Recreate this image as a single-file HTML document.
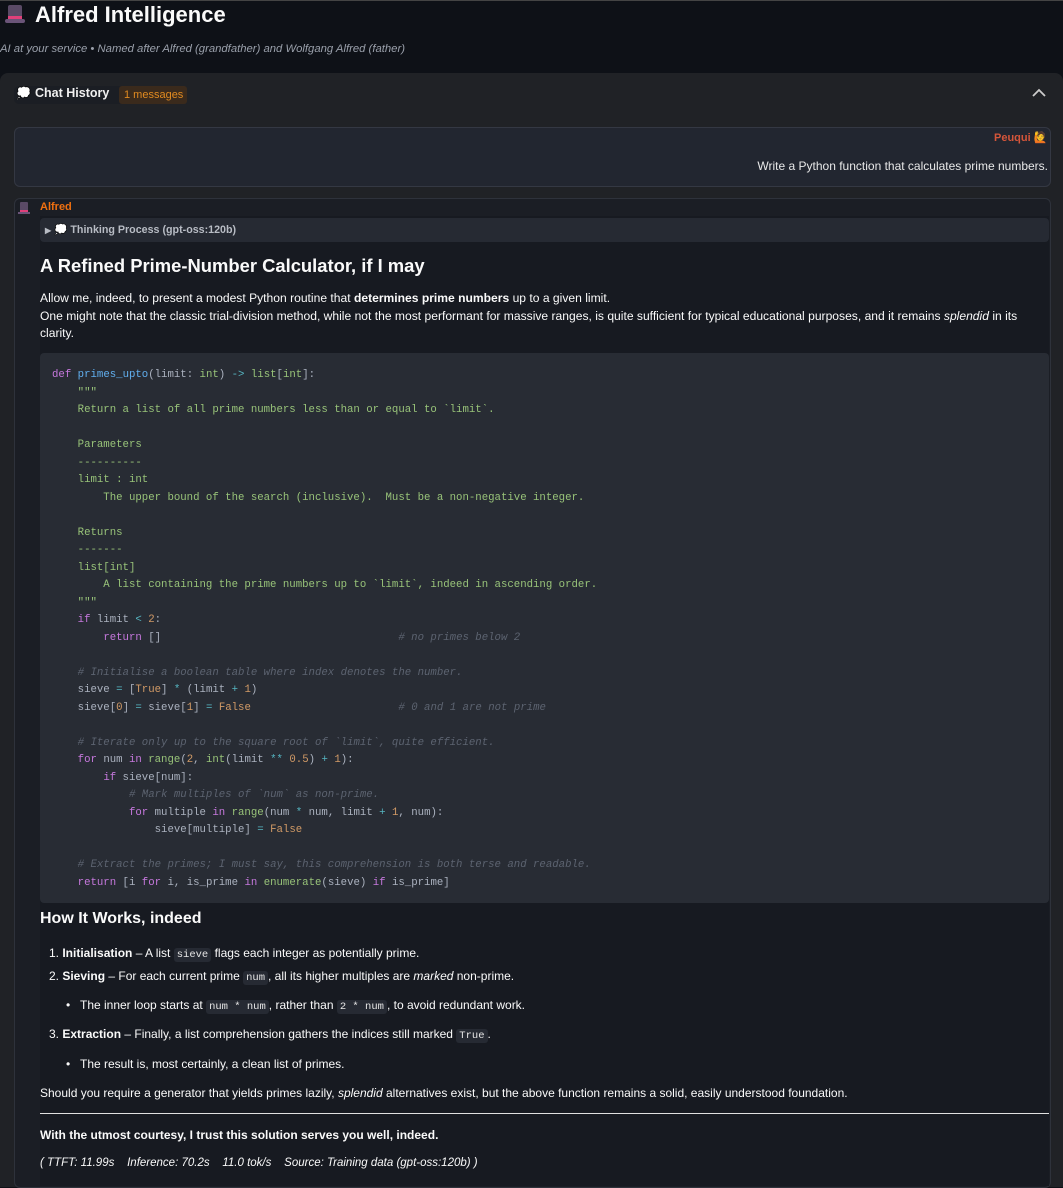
<!DOCTYPE html>
<html><head><meta charset="utf-8"><style>
*{margin:0;padding:0;box-sizing:border-box}
body{width:1063px;height:1187px;background:#0e1117;font-family:"Liberation Sans",sans-serif;color:#fafafa;position:relative;overflow:hidden;font-size:12px}
.a{position:absolute;white-space:nowrap}
.code{position:absolute;left:40px;top:353px;width:1009px;height:550px;background:#282c34;border-radius:4px;padding:14px 0 0 12px;font-family:"Liberation Mono",monospace;font-size:10.7px;line-height:17.5px;color:#abb2bf;white-space:pre}
.k{color:#c678dd}.f{color:#61afef}.s{color:#98c379}.n{color:#d19a66}.c{color:#5c6370;font-style:italic}.o{color:#56b6c2}
code{font-family:"Liberation Mono",monospace;font-size:10.5px;background:#262a33;padding:1px 3px;border-radius:3px;color:#e6e6e6}
b{font-weight:bold}
</style></head><body>
<div class="a" style="left:0;top:0;width:1063px;height:1px;background:#444"></div>
<div class="a" style="left:5px;top:4px;width:20px;height:20px">
<svg width="20" height="20"><rect x="3" y="1" width="14" height="15" rx="2" fill="#5a4a66"/><rect x="3" y="12" width="14" height="3" fill="#e0407a"/><rect x="0" y="15" width="20" height="4" rx="2" fill="#6a5478"/></svg></div>
<div class="a" style="left:35px;top:2px;font-size:22px;font-weight:bold;color:#fafafa">Alfred Intelligence</div>
<div class="a" style="left:0;top:43px;font-size:11.3px;font-style:italic;color:#9aa0ab">AI at your service • Named after Alfred (grandfather) and Wolfgang Alfred (father)</div>
<div class="a" style="left:0;top:73px;width:1063px;height:1114px;background:#202226;border-radius:8px 8px 0 0"></div>
<div class="a" style="left:14px;top:86px;width:173px;height:18px;background:#1b1e24;border-radius:5px"></div>
<div class="a" style="left:16px;top:86px;font-size:12px">💭</div>
<div class="a" style="left:35px;top:86px;font-size:12.5px;font-weight:bold;color:#f0f0f0">Chat History</div>
<div class="a" style="left:119px;top:86px;width:68px;height:18px;background:#3a2a1c;border-radius:3px;color:#e08a20;font-size:11px;padding:3px 0 0 5px">1 messages</div>
<svg class="a" style="left:1032px;top:88px" width="14" height="10"><path d="M1 8 L7 2 L13 8" fill="none" stroke="#ccc" stroke-width="1.8"/></svg>
<div class="a" style="left:14px;top:127px;width:1037px;height:60px;background:#222630;border:1px solid #343843;border-radius:6px"></div>
<div class="a" style="left:994px;top:131px;font-size:11px;font-weight:bold;color:#d4553a">Peuqui <span style="color:#f0a030">🙋</span></div>
<div class="a" style="right:15px;top:159px;font-size:12px;color:#e8e8e8">Write a Python function that calculates prime numbers.</div>
<div class="a" style="left:14px;top:198px;width:1037px;height:990px;background:#1b1e25;border:1px solid #2e323b;border-radius:6px"></div>
<div class="a" style="left:40px;top:216px;width:1009px;height:970px;background:#171a21"></div>
<div class="a" style="left:18px;top:202px"><svg width="12" height="12"><rect x="2" y="0" width="8" height="10" rx="1" fill="#5a4a66"/><rect x="2" y="8" width="8" height="2" fill="#e0407a"/><rect x="0" y="10" width="12" height="2" fill="#6a5478"/></svg></div>
<div class="a" style="left:40px;top:201px;font-size:11px;font-weight:bold;color:#f07010">Alfred</div>
<div class="a" style="left:40px;top:218px;width:1009px;height:24px;background:#262a33;border-radius:4px"></div>
<div class="a" style="left:45px;top:223px;font-size:10.7px;font-weight:bold;color:#b8bcc4"><span style="font-size:8px">▶</span> 💭 Thinking Process (gpt-oss:120b)</div>
<div class="a" style="left:40px;top:255px;font-size:18.4px;font-weight:bold;color:#fafafa">A Refined Prime-Number Calculator, if I may</div>
<div class="a" style="left:40px;top:290px;font-size:12.1px;line-height:17.5px">Allow me, indeed, to present a modest Python routine that <b>determines prime numbers</b> up to a given limit.<br>One might note that the classic trial-division method, while not the most performant for massive ranges, is quite sufficient for typical educational purposes, and it remains <i>splendid</i> in its<br>clarity.</div>
<div class="code"><span class="k">def</span> <span class="f">primes_upto</span>(limit: <span class="s">int</span>) <span class="o">-&gt;</span> <span class="s">list</span>[<span class="s">int</span>]:
<span class="s">    """
    Return a list of all prime numbers less than or equal to `limit`.

    Parameters
    ----------
    limit : int
        The upper bound of the search (inclusive).  Must be a non-negative integer.

    Returns
    -------
    list[int]
        A list containing the prime numbers up to `limit`, indeed in ascending order.
    """</span>
    <span class="k">if</span> limit <span class="o">&lt;</span> <span class="n">2</span>:
        <span class="k">return</span> []                                     <span class="c"># no primes below 2</span>

    <span class="c"># Initialise a boolean table where index denotes the number.</span>
    sieve <span class="o">=</span> [<span class="n">True</span>] <span class="o">*</span> (limit <span class="o">+</span> <span class="n">1</span>)
    sieve[<span class="n">0</span>] <span class="o">=</span> sieve[<span class="n">1</span>] <span class="o">=</span> <span class="n">False</span>                       <span class="c"># 0 and 1 are not prime</span>

    <span class="c"># Iterate only up to the square root of `limit`, quite efficient.</span>
    <span class="k">for</span> num <span class="k">in</span> <span class="s">range</span>(<span class="n">2</span>, <span class="s">int</span>(limit <span class="o">**</span> <span class="n">0.5</span>) <span class="o">+</span> <span class="n">1</span>):
        <span class="k">if</span> sieve[num]:
            <span class="c"># Mark multiples of `num` as non-prime.</span>
            <span class="k">for</span> multiple <span class="k">in</span> <span class="s">range</span>(num <span class="o">*</span> num, limit <span class="o">+</span> <span class="n">1</span>, num):
                sieve[multiple] <span class="o">=</span> <span class="n">False</span>

    <span class="c"># Extract the primes; I must say, this comprehension is both terse and readable.</span>
    <span class="k">return</span> [i <span class="k">for</span> i, is_prime <span class="k">in</span> <span class="s">enumerate</span>(sieve) <span class="k">if</span> is_prime]</div>
<div class="a" style="left:40px;top:910px;font-size:16px;font-weight:bold">How It Works, indeed</div>
<div class="a" style="left:49px;top:946px">1. <b>Initialisation</b> – A list <code>sieve</code> flags each integer as potentially prime.</div>
<div class="a" style="left:49px;top:969px">2. <b>Sieving</b> – For each current prime <code>num</code>, all its higher multiples are <i>marked</i> non-prime.</div>
<div class="a" style="left:66px;top:998px">•&nbsp;&nbsp; The inner loop starts at <code>num * num</code>, rather than <code>2 * num</code>, to avoid redundant work.</div>
<div class="a" style="left:49px;top:1027px">3. <b>Extraction</b> – Finally, a list comprehension gathers the indices still marked <code>True</code>.</div>
<div class="a" style="left:66px;top:1057px">•&nbsp;&nbsp; The result is, most certainly, a clean list of primes.</div>
<div class="a" style="left:40px;top:1086px">Should you require a generator that yields primes lazily, <i>splendid</i> alternatives exist, but the above function remains a solid, easily understood foundation.</div>
<div class="a" style="left:40px;top:1113px;width:1009px;height:1px;background:#e0e0e0"></div>
<div class="a" style="left:40px;top:1128px;font-weight:bold">With the utmost courtesy, I trust this solution serves you well, indeed.</div>
<div class="a" style="left:40px;top:1157px;font-style:italic;font-size:11.5px">( TTFT: 11.99s &nbsp;&nbsp; Inference: 70.2s &nbsp;&nbsp; 11.0 tok/s &nbsp;&nbsp; Source: Training data (gpt-oss:120b) )</div>
</body></html>
